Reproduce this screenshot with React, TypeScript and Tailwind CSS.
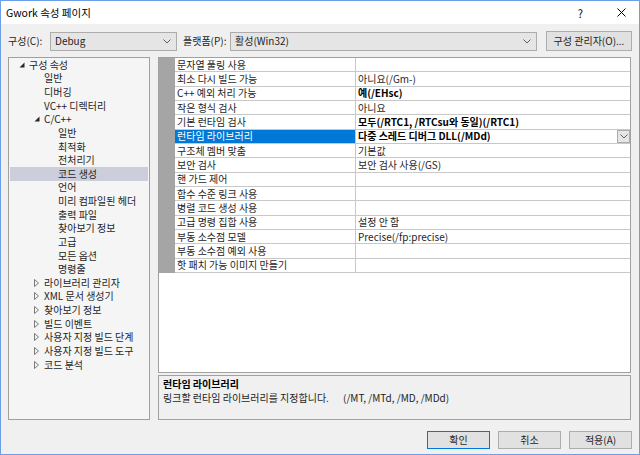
import React from 'react';

type TreeItem = { label: string; level: 0 | 1 | 2; tri?: 'open' | 'closed'; selected?: boolean };

const TREE: TreeItem[] = [
  { label: '구성 속성', level: 0, tri: 'open' },
  { label: '일반', level: 1 },
  { label: '디버깅', level: 1 },
  { label: 'VC++ 디렉터리', level: 1 },
  { label: 'C/C++', level: 1, tri: 'open' },
  { label: '일반', level: 2 },
  { label: '최적화', level: 2 },
  { label: '전처리기', level: 2 },
  { label: '코드 생성', level: 2, selected: true },
  { label: '언어', level: 2 },
  { label: '미리 컴파일된 헤더', level: 2 },
  { label: '출력 파일', level: 2 },
  { label: '찾아보기 정보', level: 2 },
  { label: '고급', level: 2 },
  { label: '모든 옵션', level: 2 },
  { label: '명령줄', level: 2 },
  { label: '라이브러리 관리자', level: 1, tri: 'closed' },
  { label: 'XML 문서 생성기', level: 1, tri: 'closed' },
  { label: '찾아보기 정보', level: 1, tri: 'closed' },
  { label: '빌드 이벤트', level: 1, tri: 'closed' },
  { label: '사용자 지정 빌드 단계', level: 1, tri: 'closed' },
  { label: '사용자 지정 빌드 도구', level: 1, tri: 'closed' },
  { label: '코드 분석', level: 1, tri: 'closed' },
];

type Prop = { name: string; value?: string; bold?: boolean; selected?: boolean };

const PROPS: Prop[] = [
  { name: '문자열 풀링 사용' },
  { name: '최소 다시 빌드 가능', value: '아니요(/Gm-)' },
  { name: 'C++ 예외 처리 가능', value: '예(/EHsc)', bold: true },
  { name: '작은 형식 검사', value: '아니요' },
  { name: '기본 런타임 검사', value: '모두(/RTC1, /RTCsu와 동일)(/RTC1)', bold: true },
  { name: '런타임 라이브러리', value: '다중 스레드 디버그 DLL(/MDd)', bold: true, selected: true },
  { name: '구조체 멤버 맞춤', value: '기본값' },
  { name: '보안 검사', value: '보안 검사 사용(/GS)' },
  { name: '핸 가드 제어' },
  { name: '함수 수준 링크 사용' },
  { name: '병렬 코드 생성 사용' },
  { name: '고급 명령 집합 사용', value: '설정 안 함' },
  { name: '부동 소수점 모델', value: 'Precise(/fp:precise)' },
  { name: '부동 소수점 예외 사용' },
  { name: '핫 패치 가능 이미지 만들기' },
];

const PAD = { 0: 'pl-[9px]', 1: 'pl-[24px]', 2: 'pl-[38px]' } as const;

function Chevron() {
  return (
    <svg width="8" height="5" viewBox="0 0 8 5" className="shrink-0">
      <path d="M0.5 0.5 L4 4 L7.5 0.5" fill="none" stroke="#606060" strokeWidth="1" />
    </svg>
  );
}

function Select({ text, className }: { text: string; className: string }) {
  return (
    <div className={`h-[19px] flex items-center justify-between border border-[#acacac] bg-[#e5e5e5] pl-[4px] pr-[5px] ${className}`}>
      <span>{text}</span>
      <Chevron />
    </div>
  );
}

function Triangle({ kind }: { kind?: 'open' | 'closed' }) {
  if (kind === 'open')
    return (
      <svg width="6" height="6" viewBox="0 0 6 6">
        <polygon points="5.5,0.5 5.5,5.5 0.5,5.5" fill="#262626" />
      </svg>
    );
  if (kind === 'closed')
    return (
      <svg width="5" height="8" viewBox="0 0 5 8">
        <polygon points="0.5,0.5 4.5,4 0.5,7.5" fill="none" stroke="#7a7a7a" strokeWidth="1" />
      </svg>
    );
  return null;
}

function Button({ label, primary }: { label: string; primary?: boolean }) {
  return (
    <div
      className={`w-[63px] h-[18px] flex items-center justify-center bg-[#e1e1e1] border ${
        primary ? 'border-[#0078d7]' : 'border-[#adadad]'
      }`}
    >
      {label}
    </div>
  );
}

export default function App() {
  return (
    <div className="w-[640px] h-[455px] border border-[#6d9fe6] flex flex-col bg-[#f0f0f0] text-[10px] leading-[14px] text-[#1e1e1e] font-['Noto_Sans_CJK_KR',sans-serif] overflow-hidden">
      {/* Title bar */}
      <div className="h-[23px] shrink-0 bg-white flex items-center pl-[5px] pr-[13px] text-[10.5px] text-black">
        <span>Gwork 속성 페이지</span>
        <span className="ml-auto mr-[34px] text-[11px]">?</span>
        <svg width="9" height="9" viewBox="0 0 9 9">
          <path d="M0.5 0.5 L8.5 8.5 M8.5 0.5 L0.5 8.5" stroke="#000" strokeWidth="1" />
        </svg>
      </div>

      {/* Body */}
      <div className="flex-1 flex flex-col pt-[7px] pl-[7px]">
        {/* Toolbar */}
        <div className="h-[20px] flex items-center">
          <span className="w-[42px]">구성(C):</span>
          <Select text="Debug" className="w-[127px]" />
          <span className="ml-[6px] w-[47px]">플랫폼(P):</span>
          <Select text="활성(Win32)" className="w-[307px]" />
          <div className="ml-[9px] w-[86px] h-[20px] flex items-center justify-center bg-[#e1e1e1] border border-[#adadad]">
            구성 관리자(O)...
          </div>
        </div>

        {/* Main area */}
        <div className="mt-[6px] h-[363px] flex gap-[8px]">
          {/* Tree */}
          <div className="w-[142px] border border-[#a0a0a0] bg-[#f5f5f5] pt-[0px]">
            {TREE.map((t, i) => (
              <div
                key={i}
                className={`h-[13.64px] flex items-center mx-px ${PAD[t.level]} ${t.selected ? 'bg-[#cccedb]' : ''}`}
              >
                <div className="w-[10px] flex items-center">
                  <Triangle kind={t.tri} />
                </div>
                <span className="whitespace-nowrap">{t.label}</span>
              </div>
            ))}
          </div>

          {/* Right column */}
          <div className="w-[473px] flex flex-col">
            <div className="h-[316px] border border-[#a0a0a0] bg-white">
              {PROPS.map((p, i) => (
                <div key={i} className="h-[14.33px] flex">
                  <div className="w-[16px] bg-[#a5a5a5]" />
                  <div
                    className={`w-[181px] flex items-center pl-[2px] border-b border-r border-[#c8c8c8] whitespace-nowrap ${
                      p.selected ? 'bg-[#0078d7] text-white' : ''
                    }`}
                  >
                    {p.name}
                  </div>
                  <div
                    className={`flex-1 flex items-center pl-[2px] border-b border-[#c8c8c8] whitespace-nowrap ${
                      p.bold ? 'font-bold text-black' : ''
                    }`}
                  >
                    <span>{p.value}</span>
                    {p.selected && (
                      <div className="ml-auto w-[13px] h-[13px] flex items-center justify-center bg-[#e5e5e5] border border-[#acacac]">
                        <Chevron />
                      </div>
                    )}
                  </div>
                </div>
              ))}
            </div>
            <div className="mt-[2px] h-[45px] border border-[#a0a0a0] bg-[#f0f0f0] pl-[4px] pt-[1px]">
              <div className="font-bold text-black">런타임 라이브러리</div>
              <div className="flex">
                <span className="w-[180px]">링크할 런타임 라이브러리를 지정합니다.</span>
                <span>(/MT, /MTd, /MD, /MDd)</span>
              </div>
            </div>
          </div>
        </div>

        {/* Buttons */}
        <div className="mt-[11px] h-[18px] flex gap-[8px] pl-[419px]">
          <Button label="확인" primary />
          <Button label="취소" />
          <Button label="적용(A)" />
        </div>
      </div>
    </div>
  );
}
